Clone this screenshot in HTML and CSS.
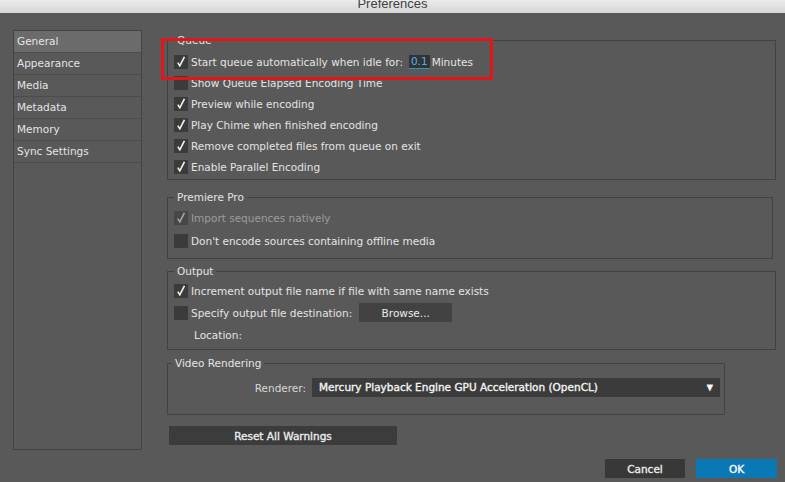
FILE: index.html
```html
<!DOCTYPE html>
<html lang="en">
<head>
  <meta charset="UTF-8">
  <title>Preferences</title>
  <link rel="stylesheet" href="styles.css">
</head>
<body>
  <div class="titlebar"><span>Preferences</span></div>

  <div class="main">
    <ul class="sidebar">
      <li class="active">General</li>
      <li>Appearance</li>
      <li>Media</li>
      <li>Metadata</li>
      <li>Memory</li>
      <li>Sync Settings</li>
    </ul>

    <div class="content">
      <fieldset class="group queue">
        <legend>Queue</legend>
        <div class="row"><span class="check on"></span>Start queue automatically when idle for:<span class="num">0.1</span>Minutes</div>
        <div class="row"><span class="check"></span>Show Queue Elapsed Encoding Time</div>
        <div class="row"><span class="check on"></span>Preview while encoding</div>
        <div class="row"><span class="check on"></span>Play Chime when finished encoding</div>
        <div class="row"><span class="check on"></span>Remove completed files from queue on exit</div>
        <div class="row"><span class="check on"></span>Enable Parallel Encoding</div>
      </fieldset>

      <fieldset class="group premiere">
        <legend>Premiere Pro</legend>
        <div class="row disabled"><span class="check on"></span>Import sequences natively</div>
        <div class="row"><span class="check"></span>Don't encode sources containing offline media</div>
      </fieldset>

      <fieldset class="group output">
        <legend>Output</legend>
        <div class="row"><span class="check on"></span>Increment output file name if file with same name exists</div>
        <div class="row"><span class="check"></span>Specify output file destination:<button class="btn browse">Browse...</button></div>
        <div class="row location">Location:</div>
      </fieldset>

      <fieldset class="group rendering">
        <legend>Video Rendering</legend>
        <div class="row renderer">
          <span class="label">Renderer:</span>
          <div class="select">Mercury Playback Engine GPU Acceleration (OpenCL)<span class="arrow">▼</span></div>
        </div>
      </fieldset>

      <button class="btn reset">Reset All Warnings</button>

      <div class="footer">
        <button class="btn cancel">Cancel</button>
        <button class="btn ok">OK</button>
      </div>
    </div>
  </div>

  <div class="highlight"></div>
</body>
</html>
```

FILE: styles.css
```css
html, body {
  margin: 0;
  padding: 0;
}
body {
  width: 785px;
  height: 482px;
  overflow: hidden;
  position: relative;
  background: #595959;
  font-family: "DejaVu Sans", sans-serif;
  font-size: 10.5px;
  color: #e4e4e4;
}
.titlebar {
  height: 13px;
  overflow: hidden;
  background: linear-gradient(#ececec, #d6d6d6);
  text-align: center;
  font-family: "Liberation Sans", sans-serif;
  font-size: 13px;
  line-height: 7px;
  color: #404040;
}
.main {
  display: flex;
  padding: 17px 0 0 13px;
}
.sidebar {
  list-style: none;
  margin: 0;
  padding: 0;
  width: 127px;
  height: 418px;
  border: 1px solid #444;
}
.sidebar li {
  height: 21px;
  line-height: 21px;
  padding-left: 3px;
  border-bottom: 1px solid #4c4c4c;
}
.sidebar li.active {
  background: #6b6b6b;
}
.content {
  margin-left: 25px;
  margin-top: 3px;
  width: 609px;
}
.group {
  margin: 0;
  padding: 0 6px;
  border: 1px solid #424242;
  min-inline-size: 0;
}
.group legend {
  padding: 0 3px;
  margin-left: 0;
  line-height: 14px;
  color: #e4e4e4;
}
.row {
  display: flex;
  align-items: center;
  height: 21px;
}
.check {
  width: 14px;
  height: 14px;
  background: #3b3b3b;
  margin-right: 3px;
  flex: none;
  position: relative;
}
.check.on::after {
  content: "";
  position: absolute;
  left: 3px;
  top: 1px;
  width: 8px;
  height: 11px;
  background: no-repeat center / contain url("data:image/svg+xml,%3Csvg xmlns='http://www.w3.org/2000/svg' viewBox='0 0 8 11'%3E%3Cpath d='M0.8 6.6 L2.8 9.8 L7.4 0.8' fill='none' stroke='%23f2f2f2' stroke-width='1.6'/%3E%3C/svg%3E");
}
.disabled {
  color: #9c9c9c;
}
.disabled .check {
  background: #474747;
}
.disabled .check.on::after {
  opacity: 0.55;
}
.num {
  background: #333;
  color: #47b4ec;
  padding: 0 2px;
  margin: 0 2px 0 6px;
  height: 14px;
  line-height: 13px;
  box-shadow: inset 0 -1px 0 #2f8fc7;
}

.queue {
  padding-top: 4px;
  padding-bottom: 2px;
}
.premiere {
  margin-top: 10px;
  margin-right: 3px;
  padding-top: 2px;
  padding-bottom: 6px;
}
.premiere .row {
  height: 23px;
}
.output {
  margin-top: 5px;
  padding-top: 2px;
  padding-bottom: 4px;
}
.output .row + .row {
  margin-top: 1px;
}
.location {
  padding-left: 20px;
}
.rendering {
  margin-top: 6px;
  width: 558px;
  box-sizing: border-box;
  padding: 8px 4px 17px;
}
.renderer {
  justify-content: flex-end;
  height: 19px;
}
.renderer .label {
  margin-right: 6px;
  color: #d8d8d8;
}
.select {
  width: 401px;
  height: 19px;
  line-height: 19px;
  background: #3b3b3b;
  padding-left: 7px;
  color: #f4f4f4;
  -webkit-text-stroke: 0.35px #f4f4f4;
  display: flex;
  justify-content: space-between;
}
.arrow {
  font-size: 8px;
  margin-right: 7px;
  color: #fff;
}

.btn {
  border: none;
  background: #3c3c3c;
  color: #ececec;
  font-family: inherit;
  font-size: 10.5px;
  height: 19px;
  padding: 0;
}
.browse {
  width: 93px;
  margin-left: 7px;
  background: #424242;
}
.reset,
.cancel,
.ok {
  -webkit-text-stroke: 0.35px currentColor;
}
.reset {
  display: block;
  width: 228px;
  margin: 11px 0 0 2px;
}
.footer {
  display: flex;
  justify-content: flex-end;
  gap: 11px;
  margin-top: 14px;
  margin-right: -1px;
}
.cancel {
  width: 80px;
  background: #383838;
}
.ok {
  width: 81px;
  background: #0b78b6;
  color: #fff;
}

.highlight {
  position: absolute;
  left: 161px;
  top: 38px;
  width: 326px;
  height: 36px;
  border: 3px solid #e4141b;
}
```
